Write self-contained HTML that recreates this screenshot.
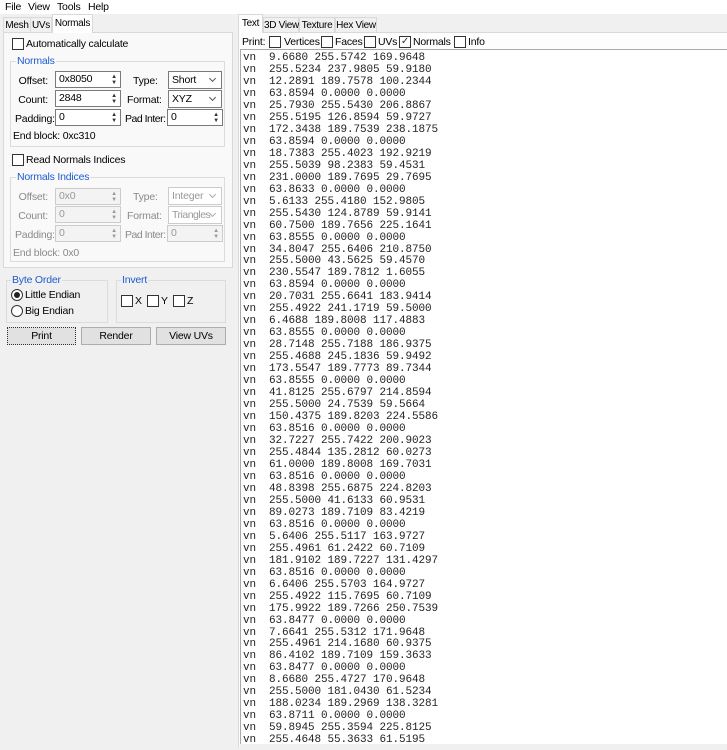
<!DOCTYPE html><html><head><style>
*{box-sizing:border-box;margin:0;padding:0}
body{width:727px;height:750px;background:#f0f0f0;font-family:"Liberation Sans",sans-serif;font-size:10.5px;letter-spacing:-0.2px;color:#000;position:relative;overflow:hidden}
.a{position:absolute;white-space:nowrap}
.cb{position:absolute;width:12px;height:12px;border:1px solid #333;background:#fff}
.in{position:absolute;height:17px;border:1px solid #7a7a7a;background:#fff;padding:1px 3px;line-height:13px}
.sp{position:absolute;right:2px;top:2px;width:8px;height:12px;font-size:6px;line-height:6px;text-align:center;color:#333}
.cmb{position:absolute;height:18px;border:1px solid #7a7a7a;background:#fff;padding:2px 3px;line-height:12px;overflow:hidden}
.cmb:after{content:"";position:absolute;right:6px;top:4px;width:4px;height:4px;border-right:1px solid #555;border-bottom:1px solid #555;transform:rotate(45deg)}
.dis{color:#999;border-color:#ccc;background:#f3f3f3}
.dis .sp{color:#999}
.dis.cmb:after{border-color:#aaa}
.grp{position:absolute;border:1px solid #dcdcdc}
.gt{position:absolute;color:#1e5bd0;background:inherit;padding:0 1px}
.lbl{position:absolute;text-align:right;white-space:nowrap}
.g{color:#8a8a8a}
.btn{position:absolute;height:18px;border:1px solid #adadad;background:#e1e1e1;text-align:center;line-height:16px}
.tab{position:absolute;border:1px solid #d9d9d9;border-bottom:none;background:#f0f0f0;text-align:center;white-space:nowrap;font-size:10px;letter-spacing:-0.3px}
.txt{position:absolute;left:240px;top:49px;width:487px;height:695px;background:#fff;border-left:1px solid #aaa;border-top:1px solid #aaa}
pre{font-family:"Liberation Mono",monospace;font-size:11px;letter-spacing:-0.1px;line-height:11.965px;position:absolute;left:2px;top:3px;color:#222}
</style></head><body>
<div class="a" style="left:0;top:0;width:727px;height:14px;background:#fff"></div>
<div class="a" style="left:5px;top:1px">File</div>
<div class="a" style="left:28px;top:1px">View</div>
<div class="a" style="left:57px;top:1px">Tools</div>
<div class="a" style="left:88px;top:1px">Help</div>

<div class="tab" style="left:3px;top:17px;width:28px;height:15px;padding-top:2px">Mesh</div>
<div class="tab" style="left:30px;top:17px;width:22px;height:15px;padding-top:2px">UVs</div>
<div class="tab" style="left:52px;top:14px;width:41px;height:19px;background:#fff;padding-top:3px;z-index:2">Normals</div>
<div class="a" style="left:3px;top:32px;width:230px;height:236px;border:1px solid #d9d9d9;background:#f9f9f9"></div>

<div class="cb" style="left:12px;top:38px"></div><div class="a" style="left:26px;top:38px">Automatically calculate</div>

<div class="grp" style="left:10px;top:61px;width:215px;height:86px"></div>
<div class="gt" style="left:16px;top:55px;background:#f9f9f9">Normals</div>
<div class="lbl" style="left:4px;top:75px;width:44px">Offset:</div>
<div class="in" style="left:55px;top:71px;width:66px">0x8050<div class="sp">▲<br>▼</div></div>
<div class="a" style="left:133px;top:75px">Type:</div>
<div class="cmb" style="left:168px;top:71px;width:54px">Short</div>
<div class="lbl" style="left:4px;top:94px;width:44px">Count:</div>
<div class="in" style="left:55px;top:90px;width:66px">2848<div class="sp">▲<br>▼</div></div>
<div class="a" style="left:127px;top:94px">Format:</div>
<div class="cmb" style="left:168px;top:90px;width:54px">XYZ</div>
<div class="a" style="left:15px;top:113px">Padding:</div>
<div class="in" style="left:55px;top:109px;width:66px">0<div class="sp">▲<br>▼</div></div>
<div class="a" style="left:125px;top:113px;letter-spacing:-0.5px">Pad Inter:</div>
<div class="in" style="left:167px;top:109px;width:56px">0<div class="sp">▲<br>▼</div></div>
<div class="a" style="left:13px;top:130px">End block: 0xc310</div>

<div class="cb" style="left:12px;top:154px"></div><div class="a" style="left:26px;top:154px">Read Normals Indices</div>

<div class="grp" style="left:10px;top:177px;width:215px;height:85px"></div>
<div class="gt" style="left:16px;top:171px;background:#f9f9f9">Normals Indices</div>
<div class="lbl g" style="left:4px;top:191px;width:44px">Offset:</div>
<div class="in dis" style="left:55px;top:188px;width:66px">0x0<div class="sp">▲<br>▼</div></div>
<div class="a g" style="left:133px;top:191px">Type:</div>
<div class="cmb dis" style="left:168px;top:187px;width:54px;background:#fff">Integer</div>
<div class="lbl g" style="left:4px;top:210px;width:44px">Count:</div>
<div class="in dis" style="left:55px;top:206px;width:66px">0<div class="sp">▲<br>▼</div></div>
<div class="a g" style="left:127px;top:210px">Format:</div>
<div class="cmb dis" style="left:168px;top:206px;width:54px;background:#fff;letter-spacing:-0.5px">Triangles</div>
<div class="a g" style="left:15px;top:229px">Padding:</div>
<div class="in dis" style="left:55px;top:225px;width:66px">0<div class="sp">▲<br>▼</div></div>
<div class="a g" style="left:125px;top:229px;letter-spacing:-0.5px">Pad Inter:</div>
<div class="in dis" style="left:167px;top:225px;width:56px">0<div class="sp">▲<br>▼</div></div>
<div class="a g" style="left:13px;top:247px">End block: 0x0</div>

<div class="grp" style="left:6px;top:280px;width:102px;height:43px"></div>
<div class="gt" style="left:11px;top:274px;background:#f0f0f0">Byte Order</div>
<div class="a" style="left:11px;top:289px;width:12px;height:12px;border:1px solid #333;border-radius:50%;background:#fff"><div style="position:absolute;left:2px;top:2px;width:6px;height:6px;border-radius:50%;background:#222"></div></div>
<div class="a" style="left:25px;top:289px">Little Endian</div>
<div class="a" style="left:11px;top:305px;width:12px;height:12px;border:1px solid #333;border-radius:50%;background:#fff"></div>
<div class="a" style="left:25px;top:305px">Big Endian</div>

<div class="grp" style="left:116px;top:280px;width:110px;height:43px"></div>
<div class="gt" style="left:121px;top:274px;background:#f0f0f0">Invert</div>
<div class="cb" style="left:121px;top:295px"></div><div class="a" style="left:135px;top:295px">X</div>
<div class="cb" style="left:147px;top:295px"></div><div class="a" style="left:161px;top:295px">Y</div>
<div class="cb" style="left:173px;top:295px"></div><div class="a" style="left:187px;top:295px">Z</div>

<div class="btn" style="left:7px;top:327px;width:69px;border:1px dotted #333">Print</div>
<div class="btn" style="left:81px;top:327px;width:70px">Render</div>
<div class="btn" style="left:156px;top:327px;width:70px">View UVs</div>

<div class="a" style="left:238px;top:32px;width:489px;height:715px;background:#fdfdfd;border-left:1px solid #d9d9d9;border-top:1px solid #d9d9d9"></div>
<div class="tab" style="left:238px;top:14px;width:25px;height:19px;background:#fdfdfd;padding-top:3px;z-index:2">Text</div>
<div class="tab" style="left:263px;top:17px;width:36px;height:15px;padding-top:2px">3D View</div>
<div class="tab" style="left:299px;top:17px;width:36px;height:15px;padding-top:2px">Texture</div>
<div class="tab" style="left:335px;top:17px;width:42px;height:15px;padding-top:2px">Hex View</div>

<div class="a" style="left:242px;top:36px">Print:</div>
<div class="cb" style="left:269px;top:36px"></div><div class="a" style="left:284px;top:36px">Vertices</div>
<div class="cb" style="left:321px;top:36px"></div><div class="a" style="left:335px;top:36px">Faces</div>
<div class="cb" style="left:364px;top:36px"></div><div class="a" style="left:378px;top:36px">UVs</div>
<div class="cb" style="left:399px;top:36px;font-size:10px;line-height:9px;text-align:center;color:#333">✓</div><div class="a" style="left:413px;top:36px">Normals</div>
<div class="cb" style="left:454px;top:36px"></div><div class="a" style="left:468px;top:36px">Info</div>

<div class="txt"><pre>vn  9.6680 255.5742 169.9648
vn  255.5234 237.9805 59.9180
vn  12.2891 189.7578 100.2344
vn  63.8594 0.0000 0.0000
vn  25.7930 255.5430 206.8867
vn  255.5195 126.8594 59.9727
vn  172.3438 189.7539 238.1875
vn  63.8594 0.0000 0.0000
vn  18.7383 255.4023 192.9219
vn  255.5039 98.2383 59.4531
vn  231.0000 189.7695 29.7695
vn  63.8633 0.0000 0.0000
vn  5.6133 255.4180 152.9805
vn  255.5430 124.8789 59.9141
vn  60.7500 189.7656 225.1641
vn  63.8555 0.0000 0.0000
vn  34.8047 255.6406 210.8750
vn  255.5000 43.5625 59.4570
vn  230.5547 189.7812 1.6055
vn  63.8594 0.0000 0.0000
vn  20.7031 255.6641 183.9414
vn  255.4922 241.1719 59.5000
vn  6.4688 189.8008 117.4883
vn  63.8555 0.0000 0.0000
vn  28.7148 255.7188 186.9375
vn  255.4688 245.1836 59.9492
vn  173.5547 189.7773 89.7344
vn  63.8555 0.0000 0.0000
vn  41.8125 255.6797 214.8594
vn  255.5000 24.7539 59.5664
vn  150.4375 189.8203 224.5586
vn  63.8516 0.0000 0.0000
vn  32.7227 255.7422 200.9023
vn  255.4844 135.2812 60.0273
vn  61.0000 189.8008 169.7031
vn  63.8516 0.0000 0.0000
vn  48.8398 255.6875 224.8203
vn  255.5000 41.6133 60.9531
vn  89.0273 189.7109 83.4219
vn  63.8516 0.0000 0.0000
vn  5.6406 255.5117 163.9727
vn  255.4961 61.2422 60.7109
vn  181.9102 189.7227 131.4297
vn  63.8516 0.0000 0.0000
vn  6.6406 255.5703 164.9727
vn  255.4922 115.7695 60.7109
vn  175.9922 189.7266 250.7539
vn  63.8477 0.0000 0.0000
vn  7.6641 255.5312 171.9648
vn  255.4961 214.1680 60.9375
vn  86.4102 189.7109 159.3633
vn  63.8477 0.0000 0.0000
vn  8.6680 255.4727 170.9648
vn  255.5000 181.0430 61.5234
vn  188.0234 189.2969 138.3281
vn  63.8711 0.0000 0.0000
vn  59.8945 255.3594 225.8125
vn  255.4648 55.3633 61.5195</pre></div>
<div class="a" style="left:240px;top:744px;width:487px;height:6px;background:#f0f0f0"></div>
</body></html>
